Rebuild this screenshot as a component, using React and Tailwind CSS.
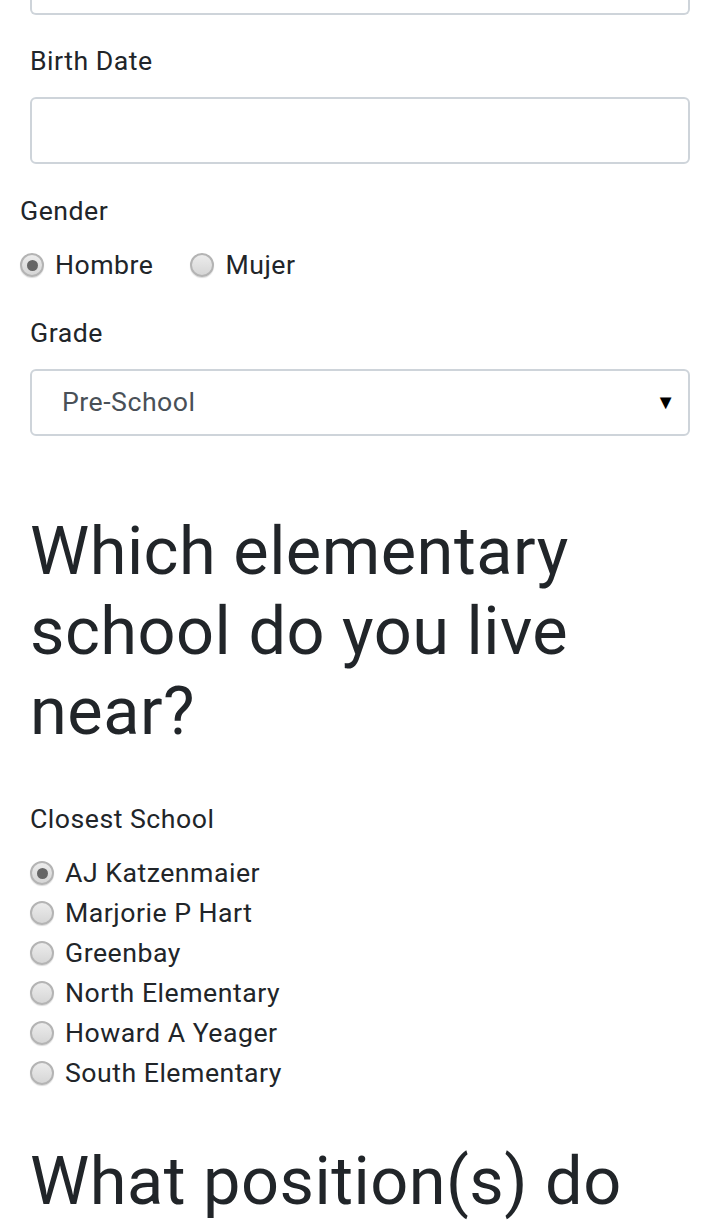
export default function App() {
  const schools = [
    "AJ Katzenmaier",
    "Marjorie P Hart",
    "Greenbay",
    "North Elementary",
    "Howard A Yeager",
    "South Elementary",
  ];

  const Radio = ({ checked }) => (
    <span className="flex h-[24px] w-[24px] shrink-0 items-center justify-center rounded-full border-2 border-[#b4b4b4] bg-gradient-to-b from-[#ececec] to-[#d6d6d6] shadow-[0_1px_1px_rgba(0,0,0,0.15)]">
      {checked && <span className="h-[11px] w-[11px] rounded-full bg-[#666]" />}
    </span>
  );

  return (
    <div
      className="min-h-screen bg-white text-[#212529] text-[26.67px] leading-[40px] tracking-[0.5px]"
      style={{ fontFamily: "Roboto, 'Noto Sans', sans-serif" }}
    >
      <div className="px-[30px]">
        {/* tail of previous input */}
        <div className="h-[15px] rounded-b-[6px] border-2 border-t-0 border-[#ced4da]" />

        <label className="mt-[26px] block">Birth Date</label>
        <div className="mt-[16px] h-[67px] rounded-[6px] border-2 border-[#ced4da] bg-white" />
      </div>

      <div className="px-[20px]">
        <div className="mt-[27px]">Gender</div>
        <div className="mt-[14px] flex items-center">
          <Radio checked />
          <span className="ml-[11px]">Hombre</span>
          <span className="ml-[37px]">
            <Radio />
          </span>
          <span className="ml-[11px]">Mujer</span>
        </div>
      </div>

      <div className="px-[30px]">
        <div className="mt-[28px]">Grade</div>
        <div className="mt-[16px] flex h-[67px] items-center justify-between rounded-[6px] border-2 border-[#ced4da] pb-[2px] pl-[30px] pr-[12px] text-[#495057]">
          <span>Pre-School</span>
          <span className="text-[20px] text-black">▼</span>
        </div>

        <h1 className="mt-[75px] text-[66.7px] font-normal leading-[80px]">
          Which elementary school do you live near?
        </h1>

        <div className="mt-[48px]">Closest School</div>
        <div className="mt-[14px] flex flex-col">
          {schools.map((s, i) => (
            <div key={s} className="flex h-[40px] items-center">
              <Radio checked={i === 0} />
              <span className="ml-[11px]">{s}</span>
            </div>
          ))}
        </div>

        <h1 className="mt-[48px] text-[66.7px] font-normal leading-[80px]">
          What position(s) do you play?
        </h1>
      </div>
    </div>
  );
}
